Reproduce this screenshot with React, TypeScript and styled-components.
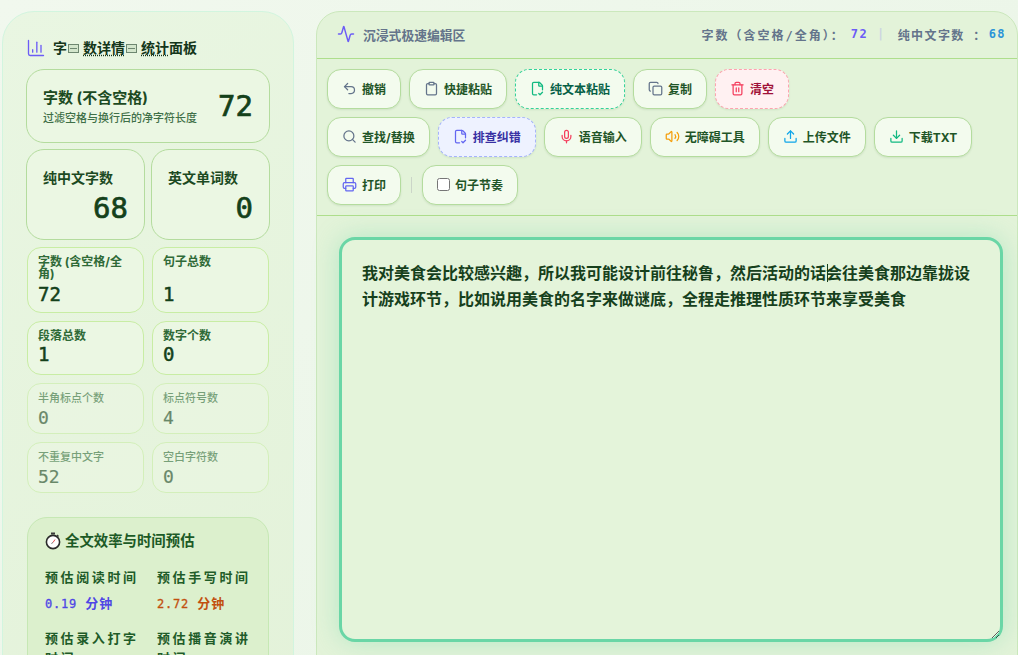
import React from "react";
import styled, { createGlobalStyle } from "styled-components";
import {
  Activity,
  ChartColumn,
  Clipboard,
  Copy,
  Download,
  FileCheck2,
  Mic,
  Printer,
  Search,
  Trash2,
  Undo2,
  Upload,
  Volume2,
} from "lucide-react";

const SANS = `Inter, "Noto Sans CJK SC", sans-serif`;
const MONO = `"DejaVu Sans Mono", "Noto Sans CJK SC", monospace`;

const GlobalStyle = createGlobalStyle`
  html, body {
    margin: 0;
    height: 100%;
    overflow: hidden;
  }
  body {
    font-family: ${SANS};
    background: linear-gradient(135deg, #f1f8ee 0%, #e9f5e6 100%);
  }
`;

const Page = styled.div`
  display: grid;
  grid-template-columns: 292px 702px;
  gap: 22px;
  padding: 11px 0 0 2px;
  height: 655px;
  box-sizing: border-box;
  overflow: hidden;
`;

const Sidebar = styled.aside`
  box-sizing: border-box;
  height: 760px;
  padding: 24px 23px;
  border: 1px solid #d2f5df;
  border-radius: 32px;
  background: linear-gradient(145deg, #e9f6e2 0%, #e3f2d9 100%);
`;

const SideTitle = styled.h2`
  display: flex;
  align-items: center;
  gap: 7px;
  margin: 0 0 9px;
  height: 24px;
  font-size: 14px;
  font-weight: 700;
  color: #14361a;
  svg {
    color: #6c5cf6;
  }
  span:first-of-type {
    padding-bottom: 2px;
  }
`;

const Dotted = styled.span`
  text-decoration: underline dotted #14361a;
  text-underline-offset: 2px;
`;

const Tofu = styled.span`
  display: inline-block;
  box-sizing: border-box;
  width: 11px;
  height: 9px;
  margin: 0 4px 0 1px;
  border: 1px solid #6d8770;
  background: linear-gradient(#6d8770, #6d8770) center / 7px 1px no-repeat,
    #d3e6cc;
`;

const HeroCard = styled.div`
  display: flex;
  align-items: center;
  justify-content: space-between;
  box-sizing: border-box;
  height: 74px;
  padding: 0 16px;
  border: 1px solid #b4dc9e;
  border-radius: 18px;
  background: #ebf7e3;
`;

const HeroLabel = styled.div`
  font-size: 15px;
  font-weight: 700;
  line-height: 20px;
  color: #1c4a22;
`;

const HeroHint = styled.div`
  margin-top: 3px;
  font-size: 11px;
  font-weight: 500;
  line-height: 14px;
  color: #3f7048;
`;

const HeroValue = styled.div`
  font-family: ${MONO};
  font-size: 29px;
  font-weight: 400;
  -webkit-text-stroke: 0.7px #14411a;
  color: #14411a;
`;

const Pair = styled.div`
  display: grid;
  grid-template-columns: 119px 119px;
  gap: 6px;
  margin-top: 6px;
`;

const PairCard = styled.div`
  box-sizing: border-box;
  height: 91px;
  padding: 18px 16px 0;
  border: 1px solid #b4dc9e;
  border-radius: 18px;
  background: #ebf7e3;
`;

const PairLabel = styled.div`
  font-size: 14px;
  font-weight: 700;
  line-height: 20px;
  color: #1c4a22;
`;

const PairValue = styled.div`
  margin-top: 2px;
  text-align: right;
  font-family: ${MONO};
  font-size: 29px;
  font-weight: 400;
  -webkit-text-stroke: 0.7px #14411a;
  line-height: 36px;
  color: #14411a;
`;

const StatGrid = styled.div`
  display: grid;
  grid-template-columns: 117px 117px;
  gap: 8px;
  margin: 7px 0 0 1px;
`;

const StatCard = styled.div<{ $muted?: boolean; $h: number }>`
  box-sizing: border-box;
  height: ${({ $h }) => $h}px;
  padding: 6px 10px 0;
  border: 1px solid #c8eda4;
  border-radius: 14px;
  background: #ebf7e3;
  opacity: ${({ $muted }) => ($muted ? 0.6 : 1)};
`;

const StatLabel = styled.div<{ $muted?: boolean; $tall?: boolean }>`
  box-sizing: border-box;
  font-size: ${({ $muted }) => ($muted ? 11 : 12)}px;
  font-weight: ${({ $muted }) => ($muted ? 500 : 700)};
  line-height: 12px;
  min-height: ${({ $muted, $tall }) => ($tall ? 28 : $muted ? 16 : 14)}px;
  padding-top: 2px;
  color: #2f6a37;
`;

const StatValue = styled.div<{ $muted?: boolean }>`
  font-family: ${MONO};
  font-size: ${({ $muted }) => ($muted ? 18 : 19)}px;
  font-weight: 400;
  -webkit-text-stroke: ${({ $muted }) => ($muted ? "0.2px" : "0.5px")} #14411a;
  line-height: 24px;
  color: #14411a;
`;

const TimeCard = styled.section`
  box-sizing: border-box;
  margin: 24px 0 0 1px;
  padding: 13px 17px;
  width: 242px;
  height: 220px;
  border: 1px solid #c6e8b4;
  border-radius: 20px;
  background: #dcf0cd;
`;

const TimeTitle = styled.h3`
  display: flex;
  align-items: center;
  gap: 4px;
  margin: 0 0 17px;
  font-size: 14.4px;
  font-weight: 700;
  line-height: 20px;
  color: #1c5a26;
`;

const TimeGrid = styled.div`
  display: grid;
  grid-template-columns: 100px 100px;
  column-gap: 12px;
  row-gap: 15px;
`;

const TimeLabel = styled.div`
  font-family: ${MONO};
  font-size: 13px;
  font-weight: 700;
  letter-spacing: 2.6px;
  line-height: 20px;
  color: #1f5c29;
`;

const TimeValue = styled.div<{ $color: string }>`
  margin-top: 6px;
  font-family: ${MONO};
  font-size: 12px;
  letter-spacing: 0.8px;
  line-height: 20px;
  color: ${({ $color }) => $color};
  -webkit-text-stroke: 0.3px ${({ $color }) => $color};
`;

const TimeUnit = styled.span`
  font-size: 13px;
  font-weight: 700;
  letter-spacing: 1px;
  -webkit-text-stroke: 0;
`;

const Main = styled.main`
  box-sizing: border-box;
  height: 700px;
  border: 1px solid #cbe8bc;
  border-radius: 24px;
  background: #e3f3d9;
`;

const TopBar = styled.header`
  display: flex;
  align-items: center;
  justify-content: space-between;
  box-sizing: border-box;
  height: 47px;
  padding: 0 11px 2px 20px;
  border-bottom: 1px solid #aede8c;
`;

const TopTitle = styled.div`
  display: flex;
  align-items: center;
  gap: 8px;
  font-size: 12.8px;
  font-weight: 700;
  color: #64748b;
  svg {
    color: #6c5cf6;
  }
`;

const Counters = styled.div`
  display: flex;
  align-items: center;
  font-family: ${MONO};
  font-size: 12px;
  font-weight: 700;
  letter-spacing: 1.4px;
  color: #64748b;
`;

const CounterLabel = styled.span<{ $spread?: boolean }>`
  letter-spacing: ${({ $spread }) => ($spread ? 2 : 1.4)}px;
`;

const Num = styled.span<{ $color: string; $gap: number }>`
  margin-left: ${({ $gap }) => $gap}px;
  color: ${({ $color }) => $color};
`;

const CounterSep = styled.span`
  margin: 0 12px 0 9px;
  color: #cbd5e1;
`;

const Toolbar = styled.div`
  display: flex;
  flex-direction: column;
  gap: 8px;
  box-sizing: border-box;
  height: 157px;
  padding: 10px 10px 0;
  border-bottom: 1px solid #aede8c;
`;

const ToolRow = styled.div`
  display: flex;
  align-items: center;
  gap: 8px;
`;

const variants = {
  plain: { bg: "#f3fbee", line: "1px solid #b4dc9e", text: "#1f5527" },
  paste: { bg: "#f3fbee", line: "1px dashed #34d399", text: "#065f46" },
  check: { bg: "#eef2ff", line: "1px dashed #a5b4fc", text: "#3730a3" },
  clear: { bg: "#fff1f2", line: "1px dashed #fda4af", text: "#9f1239" },
};

const ToolButton = styled.button<{ $variant?: keyof typeof variants }>`
  display: inline-flex;
  align-items: center;
  gap: 5px;
  box-sizing: border-box;
  height: 40px;
  padding: 0 14px 2px;
  border: ${({ $variant = "plain" }) => variants[$variant].line};
  border-radius: 14px;
  background: ${({ $variant = "plain" }) => variants[$variant].bg};
  box-shadow: 0 1px 2px rgba(60, 110, 50, 0.12);
  font-family: ${SANS};
  font-size: 12px;
  font-weight: 700;
  color: ${({ $variant = "plain" }) => variants[$variant].text};
  white-space: nowrap;
`;

const RhythmCheck = styled.input`
  width: 13px;
  height: 13px;
  margin: 0;
`;

const ToolSep = styled.span`
  width: 1px;
  height: 16px;
  margin: 0 2px;
  background: #cbd5c8;
`;

const EditorWrap = styled.div`
  position: relative;
  padding: 21px 14px 0 22px;
`;

const Editor = styled.textarea`
  display: block;
  box-sizing: border-box;
  width: 100%;
  height: 405px;
  padding: 20px;
  border: 3px solid #6ad6a6;
  border-radius: 16px;
  outline: none;
  background: #e4f4da;
  box-shadow: 0 0 26px rgba(106, 214, 166, 0.38);
  font-family: ${SANS};
  font-size: 16px;
  font-weight: 700;
  line-height: 26px;
  color: #16401c;
`;

// text caret sits right after 话 in the shot
const Caret = styled.span`
  position: absolute;
  left: 510px;
  top: 48px;
  width: 1px;
  height: 18px;
  background: #16401c;
  pointer-events: none;
`;

const TEXT =
  "我对美食会比较感兴趣，所以我可能设计前往秘鲁，然后活动的话会往美食那边靠拢设计游戏环节，比如说用美食的名字来做谜底，全程走推理性质环节来享受美食";

const stats = [
  { label: "字数 (含空格/全角)", value: "72", h: 66, tall: true },
  { label: "句子总数", value: "1", h: 66, tall: true },
  { label: "段落总数", value: "1", h: 54 },
  { label: "数字个数", value: "0", h: 54 },
  { label: "半角标点个数", value: "0", h: 51, muted: true },
  { label: "标点符号数", value: "4", h: 51, muted: true },
  { label: "不重复中文字", value: "52", h: 51, muted: true },
  { label: "空白字符数", value: "0", h: 51, muted: true },
];

const times = [
  { label: "预估阅读时间", value: "0.19", color: "#4f46e5" },
  { label: "预估手写时间", value: "2.72", color: "#c2500f" },
  { label: "预估录入打字时间", value: "", color: "#4f46e5" },
  { label: "预估播音演讲时间", value: "", color: "#c2500f" },
];

function Stopwatch() {
  return (
    <svg width="16" height="18" viewBox="0 0 16 18" aria-hidden="true">
      <rect x="6" y="0.5" width="4" height="2" fill="#3a3a3a" />
      <path d="M12 3l1.5 1.5" stroke="#3a3a3a" strokeWidth="1.4" />
      <circle cx="8" cy="10" r="6.6" fill="#fff" stroke="#2b2b2b" strokeWidth="1.6" />
      <path d="M8 10.5l2-3" stroke="#e5484d" strokeWidth="1" />
      <path d="M8 10.5l-1.6 1" stroke="#555" strokeWidth="0.8" />
    </svg>
  );
}

export default function App() {
  return (
    <Page>
      <GlobalStyle />
      <Sidebar>
        <SideTitle>
          <ChartColumn size={20} strokeWidth={1.6} />
          <span>
            字<Tofu />
            <Dotted>数详情</Dotted>
            <Tofu />
            <Dotted>统计</Dotted>面板
          </span>
        </SideTitle>
        <HeroCard>
          <div>
            <HeroLabel>字数 (不含空格)</HeroLabel>
            <HeroHint>过滤空格与换行后的净字符长度</HeroHint>
          </div>
          <HeroValue>72</HeroValue>
        </HeroCard>
        <Pair>
          <PairCard>
            <PairLabel>纯中文字数</PairLabel>
            <PairValue>68</PairValue>
          </PairCard>
          <PairCard>
            <PairLabel>英文单词数</PairLabel>
            <PairValue>0</PairValue>
          </PairCard>
        </Pair>
        <StatGrid>
          {stats.map((s) => (
            <StatCard key={s.label} $h={s.h} $muted={s.muted}>
              <StatLabel $muted={s.muted} $tall={s.tall}>{s.label}</StatLabel>
              <StatValue $muted={s.muted}>{s.value}</StatValue>
            </StatCard>
          ))}
        </StatGrid>
        <TimeCard>
          <TimeTitle>
            <Stopwatch />
            全文效率与时间预估
          </TimeTitle>
          <TimeGrid>
            {times.map((t) => (
              <div key={t.label}>
                <TimeLabel>{t.label}</TimeLabel>
                {t.value && (
                  <TimeValue $color={t.color}>
                    {t.value} <TimeUnit>分钟</TimeUnit>
                  </TimeValue>
                )}
              </div>
            ))}
          </TimeGrid>
        </TimeCard>
      </Sidebar>
      <Main>
        <TopBar>
          <TopTitle>
            <Activity size={18} />
            沉浸式极速编辑区
          </TopTitle>
          <Counters>
            <CounterLabel $spread>字数（含空格/全角）：</CounterLabel>
            <Num $color="#6c5cf6" $gap={6}>72</Num>
            <CounterSep>|</CounterSep>
            <CounterLabel>纯中文字数 ：</CounterLabel>
            <Num $color="#2b94d8" $gap={2}>68</Num>
          </Counters>
        </TopBar>
        <Toolbar>
          <ToolRow>
            <ToolButton><Undo2 size={15} color="#64748b" />撤销</ToolButton>
            <ToolButton><Clipboard size={15} color="#64748b" />快捷粘贴</ToolButton>
            <ToolButton $variant="paste"><FileCheck2 size={15} color="#10b981" />纯文本粘贴</ToolButton>
            <ToolButton><Copy size={15} color="#64748b" />复制</ToolButton>
            <ToolButton $variant="clear"><Trash2 size={15} color="#f43f5e" />清空</ToolButton>
          </ToolRow>
          <ToolRow>
            <ToolButton><Search size={15} color="#64748b" />查找/替换</ToolButton>
            <ToolButton $variant="check"><FileCheck2 size={15} color="#6366f1" />排查纠错</ToolButton>
            <ToolButton><Mic size={15} color="#f43f5e" />语音输入</ToolButton>
            <ToolButton><Volume2 size={15} color="#f59e0b" />无障碍工具</ToolButton>
            <ToolButton><Upload size={15} color="#0ea5e9" />上传文件</ToolButton>
            <ToolButton><Download size={15} color="#10b981" />下载TXT</ToolButton>
          </ToolRow>
          <ToolRow>
            <ToolButton><Printer size={15} color="#6366f1" />打印</ToolButton>
            <ToolSep />
            <ToolButton as="label"><RhythmCheck type="checkbox" />句子节奏</ToolButton>
          </ToolRow>
        </Toolbar>
        <EditorWrap>
          <Editor defaultValue={TEXT} spellCheck={false} />
          <Caret />
        </EditorWrap>
      </Main>
    </Page>
  );
}
